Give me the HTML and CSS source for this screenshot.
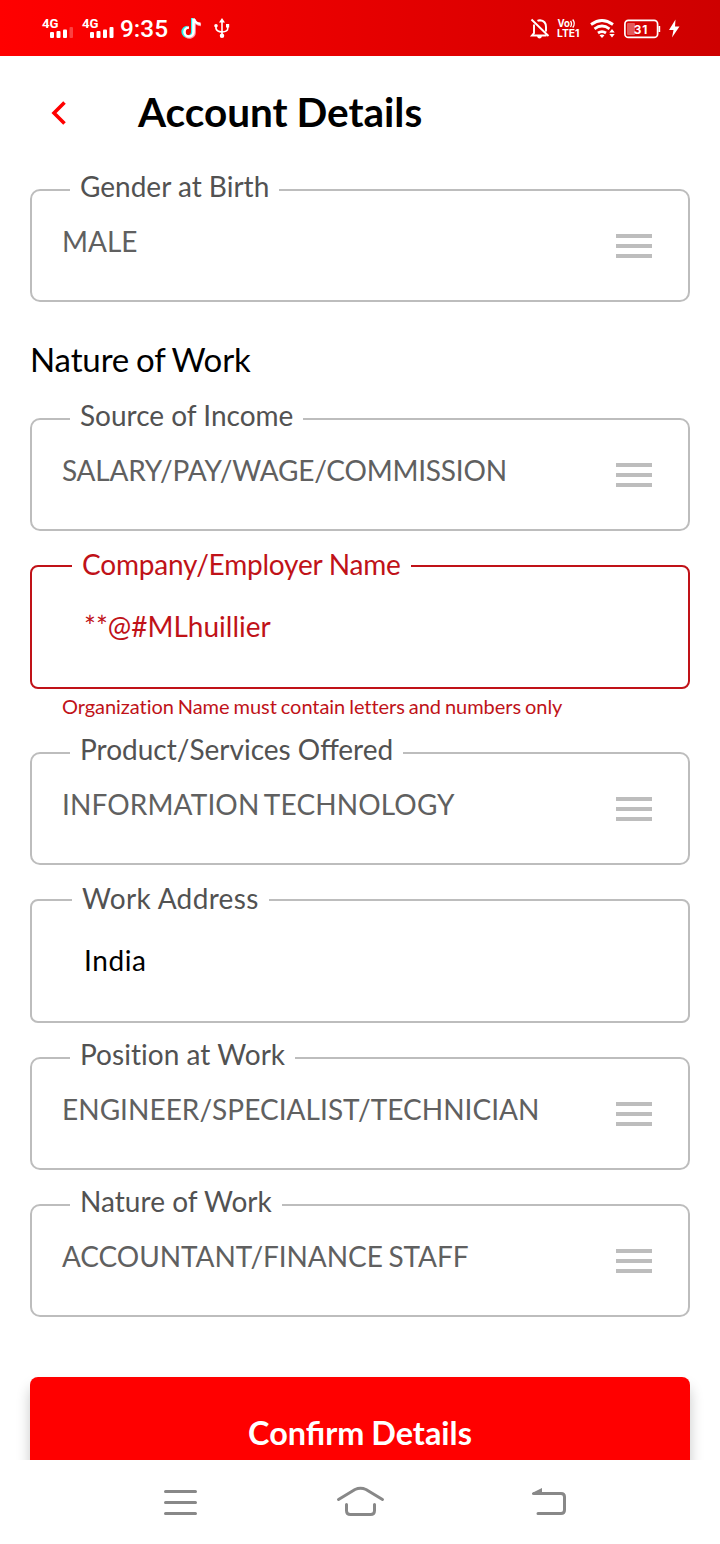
FILE: index.html
```html
<!DOCTYPE html>
<html lang="en">
<head>
<meta charset="utf-8">
<title>Account Details</title>
<link rel="stylesheet" href="styles.css">
</head>
<body>
<div class="screen">
  <div class="status">
    <svg class="status-left" width="240" height="56" viewBox="0 0 240 56" fill="#fff">
      <g font-family="Roboto" font-weight="700" font-size="13.500">
        <text x="42" y="27.500" textLength="16.500" lengthAdjust="spacingAndGlyphs">4G</text>
        <text x="82" y="27.500" textLength="16.500" lengthAdjust="spacingAndGlyphs">4G</text>
      </g>
      <g>
        <rect x="50" y="32" width="4" height="6" rx="1"/><rect x="56.500" y="31" width="4" height="7" rx="1"/><rect x="63" y="29.500" width="4" height="8.500" rx="1"/><rect x="69.500" y="27" width="3.500" height="11" rx="1" opacity=".25"/>
        <rect x="90" y="32" width="4" height="6" rx="1"/><rect x="96.500" y="31" width="4" height="7" rx="1"/><rect x="103" y="29.500" width="4" height="8.500" rx="1"/><rect x="109.500" y="27" width="4" height="11" rx="1"/>
      </g>
      <text x="120" y="37" font-family="Roboto" font-weight="500" font-size="24.500" textLength="48" lengthAdjust="spacingAndGlyphs">9:35</text>
      <g fill="none" stroke-width="2.600">
        <path stroke="#25f4ee" d="M192.300 18V31.500a4.800 4.800 0 1 1-4.800-4.500"/>
        <path stroke="#ff9aa8" d="M194.500 19V32.500a5 5 0 0 1-8.500 3.500M194.500 20q1.500 4.500 6.500 4.900"/>
        <path stroke="#fff" d="M193.500 18.500V32a4.500 4.500 0 1 1-4.500-4.500M193.500 18.500q1.500 5 7 5.300"/>
      </g>
      <path d="M222 18l3 4.500h-6zM222 33.500a2.200 2.200 0 1 1 0 4.500a2.200 2.200 0 0 1 0-4.500zM226 24h3.200v3.400h-3.200zM216 24a1.800 1.800 0 1 1 0 3.600a1.800 1.800 0 0 1 0-3.600z"/>
      <path fill="none" stroke="#fff" stroke-width="1.600" d="M222 21v14M216 26v2.500q.5 3 6 3.500q6-.5 5.700-3.500V26"/>
    </svg>
    <svg width="200" height="56" viewBox="520 0 200 56" fill="#fff">
      <path fill="none" stroke="#fff" stroke-width="1.900" d="M531.500 19.500l17 16.500M534 24.500v8.700l-2 2.300h14.500M546 31.500v-4.500q0-6-6-6.700q-1.500 0-2.500.6"/>
      <path d="M537 36h5q-.5 2.500-2.500 2.500T537 36z"/>
      <text font-family="Inter" font-weight="700" font-size="10.500"><tspan x="557.500" y="27.300" textLength="12.500" lengthAdjust="spacingAndGlyphs">Vo</tspan><tspan x="557" y="36.800" textLength="22.500" lengthAdjust="spacingAndGlyphs">LTE1</tspan></text>
      <path fill="none" stroke="#fff" stroke-width="1.300" d="M570.500 21q2 2.700 0 6M572.700 19.500q3.200 4 0 8"/>
      <path fill="none" stroke="#fff" stroke-width="2.800" d="M591 24.500q11-8 22 0M594.500 28.800q7.500-5.500 15 0M598 33q4-2.800 8 0"/>
      <path d="M599.500 35.200q2.500-1.300 5 0L602 38zM612 29l2.700 3.500h-5.400zM609.300 34h5.400L612 37.500z"/>
      <rect x="624.900" y="20.400" width="32.700" height="17" rx="3.500" fill="none" stroke="#fff" stroke-width="1.700"/>
      <rect x="627" y="23" width="8" height="12" rx="1" opacity=".35"/>
      <path d="M658.500 26h1.700v6h-1.700zM675.500 19.500L669 30h4.500L672 37.500l7.500-11H675z"/>
      <text x="633.800" y="34" font-family="Inter" font-weight="700" font-size="11.800" textLength="13.500">31</text>
    </svg>
  </div>

  <header class="header">
    <svg class="back" width="16" height="26" viewBox="0 0 16 26" fill="none" stroke="#f00" stroke-width="3.600"><path d="M14.500 2.500L4 13l10.500 10.500"/></svg>
    <h1 class="title">Account Details</h1>
  </header>

  <main class="form">
    <div class="field select"><span class="label">Gender at Birth</span><span class="value">MALE</span><span class="menu"><i></i><i></i><i></i></span></div>
    <h2 class="section">Nature of Work</h2>
    <div class="field select"><span class="label">Source of Income</span><span class="value tight">SALARY/PAY/WAGE/COMMISSION</span><span class="menu"><i></i><i></i><i></i></span></div>
    <div class="field input error"><span class="label tight">Company/Employer Name</span><span class="value">**@#MLhuillier</span></div>
    <p class="message">Organization Name must contain letters and numbers only</p>
    <div class="field select"><span class="label">Product/Services Offered</span><span class="value narrow-gap">INFORMATION TECHNOLOGY</span><span class="menu"><i></i><i></i><i></i></span></div>
    <div class="field input"><span class="label loose">Work Address</span><span class="value looser">India</span></div>
    <div class="field select"><span class="label plain">Position at Work</span><span class="value plain">ENGINEER/SPECIALIST/TECHNICIAN</span><span class="menu"><i></i><i></i><i></i></span></div>
    <div class="field select"><span class="label plain">Nature of Work</span><span class="value snug">ACCOUNTANT/FINANCE STAFF</span><span class="menu"><i></i><i></i><i></i></span></div>
    <button class="confirm">Confirm Details</button>
  </main>

  <nav class="navbar">
    <svg width="36" height="34" viewBox="162 1485 36 34"><path d="M165.500 1491.500h30M165.500 1502.500h30M165.500 1513.500h30"/></svg>
    <svg class="home" width="50" height="34" viewBox="335 1485 50 34"><path d="M338.500 1499.500l16.500-10q5.500-2.500 11 0l16.500 10M346.500 1504.500v6q0 4 4 4h20q4 0 4-4v-6"/></svg>
    <svg width="38" height="34" viewBox="531 1485 38 34"><path d="M538 1513.500h23q3.500 0 3.500-3.500v-13q0-3.500-3.500-3.500h-27"/><path class="solid" d="M532 1494.500v-1.500l10-5v7z"/></svg>
  </nav>
</div>
</body>
</html>
```
FILE: styles.css
```css
body {
  margin: 0;
  font-family: Lato, sans-serif;
  background: #fff;
}
.screen {
  display: flex;
  flex-direction: column;
  width: 720px;
  height: 1544px;
  overflow: hidden;
}
.status {
  display: flex;
  justify-content: space-between;
  flex: none;
  height: 56px;
  background: linear-gradient(to right, #f00, #ce0000);
}
.header {
  display: flex;
  flex: none;
  height: 114px;
  padding-left: 50px;
  box-sizing: border-box;
}
.back {
  margin-top: 44px;
}
.title {
  margin: 32px 0 0 72px;
  font-size: 40.5px;
  line-height: 48px;
  font-weight: 700;
  word-spacing: -1px;
  white-space: nowrap;
}
.form {
  flex: 1;
  min-height: 0;
  overflow: hidden;
  padding: 19px 30px 0;
}
.field {
  position: relative;
  display: flex;
  justify-content: space-between;
  box-sizing: border-box;
  border: 2px solid #bdbdbd;
  border-radius: 10px;
  font-size: 28px;
  line-height: 34px;
  white-space: nowrap;
}
.select {
  height: 113px;
  margin-bottom: 34px;
  padding: 33px 36px 0 30px;
}
.input {
  height: 124px;
  margin-bottom: 34px;
  padding: 42px 52px 0;
  border-radius: 8px;
}
.label {
  position: absolute;
  top: -22px;
  left: 38px;
  padding: 0 10px;
  background: #fff;
  color: #525252;
}
.input .label {
  top: -20px;
  left: 40px;
}
.select .value {
  color: #606060;
}
.tight {
  letter-spacing: -.21px;
}
.snug {
  letter-spacing: -.07px;
  word-spacing: -1.5px;
}
.narrow-gap {
  letter-spacing: .13px;
  word-spacing: -2px;
}
.plain {
  letter-spacing: .04px;
}
.loose {
  letter-spacing: .34px;
}
.looser {
  letter-spacing: .6px;
}
.error {
  margin-bottom: 0;
  border-color: #c01218;
}
.error .label,
.error .value {
  color: #c01218;
}
.menu {
  display: flex;
  flex-direction: column;
  gap: 6px;
  width: 36px;
  padding-top: 10px;
}
.menu i {
  height: 4px;
  background: #bdbdbd;
}
.section {
  margin: 0 0 37px;
  padding-top: 2px;
  font-size: 33px;
  line-height: 43px;
  font-weight: 400;
  letter-spacing: -.12px;
  word-spacing: -1.5px;
}
.message {
  height: 58px;
  margin: 5px 0 0 32px;
  font-size: 20px;
  line-height: 24px;
  letter-spacing: -.06px;
  word-spacing: -1px;
  color: #c01218;
  white-space: nowrap;
}
.confirm {
  display: block;
  width: 660px;
  height: 113px;
  margin-top: 60px;
  padding: 0 0 2px;
  border: 0;
  border-radius: 8px;
  background: #f00;
  color: #fff;
  font: 700 32.4px/40px Lato, sans-serif;
  word-spacing: -1px;
  box-shadow: 0 10px 14px rgba(0, 0, 0, .22);
}
.navbar {
  display: flex;
  flex: none;
  height: 84px;
  padding: 25px 0 0 162px;
  box-sizing: border-box;
  background: #fff;
}
.navbar .home {
  margin: 0 146px 0 137px;
}
.navbar path {
  fill: none;
  stroke: #888;
  stroke-width: 3;
  stroke-linecap: round;
  stroke-linejoin: round;
}
.navbar .solid {
  fill: #888;
  stroke: none;
}
```
